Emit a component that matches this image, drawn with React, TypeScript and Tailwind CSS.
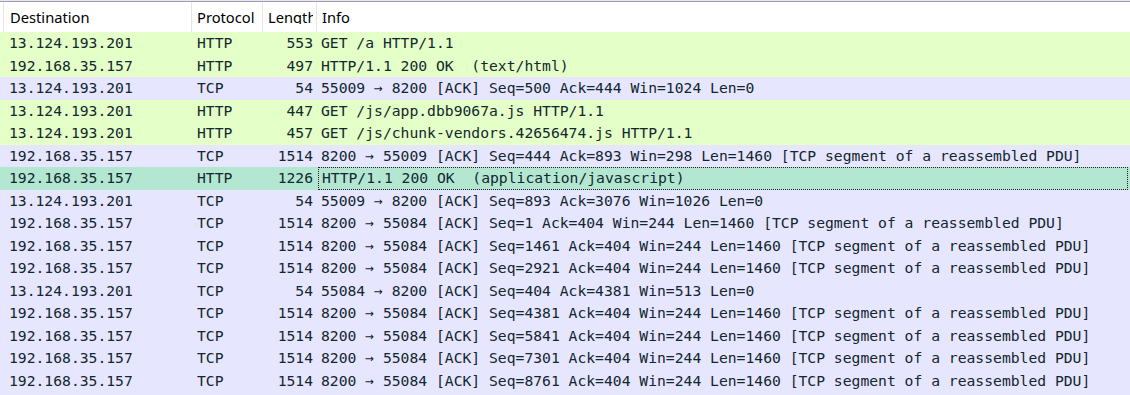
import React from "react";

type Row = { dst: string; proto: string; len: string; info: string };

const rows: Row[] = [
  { dst: "13.124.193.201", proto: "HTTP", len: "553", info: "GET /a HTTP/1.1" },
  { dst: "192.168.35.157", proto: "HTTP", len: "497", info: "HTTP/1.1 200 OK  (text/html)" },
  { dst: "13.124.193.201", proto: "TCP", len: "54", info: "55009 → 8200 [ACK] Seq=500 Ack=444 Win=1024 Len=0" },
  { dst: "13.124.193.201", proto: "HTTP", len: "447", info: "GET /js/app.dbb9067a.js HTTP/1.1" },
  { dst: "13.124.193.201", proto: "HTTP", len: "457", info: "GET /js/chunk-vendors.42656474.js HTTP/1.1" },
  { dst: "192.168.35.157", proto: "TCP", len: "1514", info: "8200 → 55009 [ACK] Seq=444 Ack=893 Win=298 Len=1460 [TCP segment of a reassembled PDU]" },
  { dst: "192.168.35.157", proto: "HTTP", len: "1226", info: "HTTP/1.1 200 OK  (application/javascript)" },
  { dst: "13.124.193.201", proto: "TCP", len: "54", info: "55009 → 8200 [ACK] Seq=893 Ack=3076 Win=1026 Len=0" },
  { dst: "192.168.35.157", proto: "TCP", len: "1514", info: "8200 → 55084 [ACK] Seq=1 Ack=404 Win=244 Len=1460 [TCP segment of a reassembled PDU]" },
  { dst: "192.168.35.157", proto: "TCP", len: "1514", info: "8200 → 55084 [ACK] Seq=1461 Ack=404 Win=244 Len=1460 [TCP segment of a reassembled PDU]" },
  { dst: "192.168.35.157", proto: "TCP", len: "1514", info: "8200 → 55084 [ACK] Seq=2921 Ack=404 Win=244 Len=1460 [TCP segment of a reassembled PDU]" },
  { dst: "13.124.193.201", proto: "TCP", len: "54", info: "55084 → 8200 [ACK] Seq=404 Ack=4381 Win=513 Len=0" },
  { dst: "192.168.35.157", proto: "TCP", len: "1514", info: "8200 → 55084 [ACK] Seq=4381 Ack=404 Win=244 Len=1460 [TCP segment of a reassembled PDU]" },
  { dst: "192.168.35.157", proto: "TCP", len: "1514", info: "8200 → 55084 [ACK] Seq=5841 Ack=404 Win=244 Len=1460 [TCP segment of a reassembled PDU]" },
  { dst: "192.168.35.157", proto: "TCP", len: "1514", info: "8200 → 55084 [ACK] Seq=7301 Ack=404 Win=244 Len=1460 [TCP segment of a reassembled PDU]" },
  { dst: "192.168.35.157", proto: "TCP", len: "1514", info: "8200 → 55084 [ACK] Seq=8761 Ack=404 Win=244 Len=1460 [TCP segment of a reassembled PDU]" },
];

const SELECTED = 6;

export default function App() {
  return (
    <div className="w-[1130px] h-[395px] overflow-hidden bg-[#e7e6ff] flex flex-col">
      {/* header */}
      <div className="h-[31px] shrink-0 bg-white border-t border-[#a0a0a0] mt-px flex text-[14.7px] text-black leading-none" style={{ fontFamily: '"Noto Sans", "Open Sans", sans-serif' }}>
        <div className="w-[4px] shrink-0 border-r border-[#e5e5e5]" />
        <div className="w-[188px] shrink-0 border-r border-[#e5e5e5] pl-[6px] flex items-center">Destination</div>
        <div className="w-[71px] shrink-0 border-r border-[#e5e5e5] pl-[5px] flex items-center">Protocol</div>
        <div className="w-[54px] shrink-0 border-r border-[#e5e5e5] pl-[5px] pr-[3px] flex items-center">
          <span className="overflow-hidden whitespace-nowrap">Length</span>
        </div>
        <div className="flex-1 pl-[5px] flex items-center">Info</div>
      </div>
      {/* rows */}
      <div className="flex flex-col text-[14.7px] text-[#12272e]" style={{ fontFamily: '"DejaVu Sans Mono", "Liberation Mono", monospace' }}>
        {rows.map((r, i) => {
          const bg = i === SELECTED ? "bg-[#b4e7d2]" : r.proto === "HTTP" ? "bg-[#e4ffc7]" : "bg-[#e7e6ff]";
          return (
            <div key={i} className={`h-[22.5px] flex items-center whitespace-pre ${bg}`}>
              <div className="w-[192px] shrink-0 pl-[9px]">{r.dst}</div>
              <div className="w-[71px] shrink-0 pl-[5px]">{r.proto}</div>
              <div className="w-[54px] shrink-0 pr-[4px] text-right">{r.len}</div>
              {i === SELECTED ? (
                <div className="flex-1 self-stretch flex items-center pl-[3px] ml-px mr-[2px] border border-dotted border-[#222]">{r.info}</div>
              ) : (
                <div className="flex-1 pl-[4px]">{r.info}</div>
              )}
            </div>
          );
        })}
      </div>
    </div>
  );
}
